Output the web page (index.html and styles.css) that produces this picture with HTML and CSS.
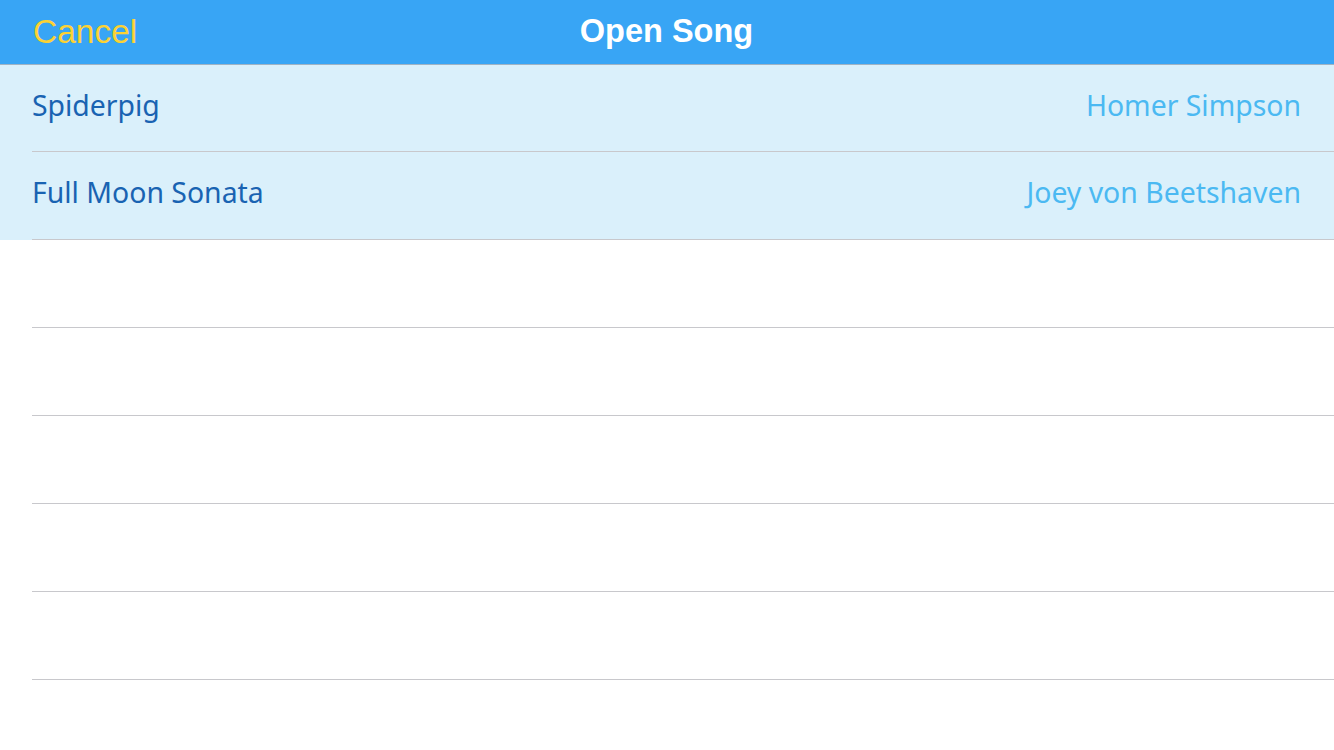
FILE: index.html
```html
<!DOCTYPE html>
<html>
<head>
<meta charset="utf-8">
<link rel="stylesheet" href="styles.css">
</head>
<body>
<div class="app">
  <header class="navbar">
    <span class="cancel">Cancel</span>
    <span class="title">Open Song</span>
    <span class="spacer"></span>
  </header>
  <ul class="list">
    <li class="row filled"><div class="cell"><span class="song">Spiderpig</span><span class="artist">Homer Simpson</span></div></li>
    <li class="row filled"><div class="cell"><span class="song">Full Moon Sonata</span><span class="artist">Joey von Beetshaven</span></div></li>
    <li class="row"><div class="cell"></div></li>
    <li class="row"><div class="cell"></div></li>
    <li class="row"><div class="cell"></div></li>
    <li class="row"><div class="cell"></div></li>
    <li class="row"><div class="cell"></div></li>
    <li class="row"><div class="cell"></div></li>
  </ul>
</div>
</body>
</html>
```
FILE: styles.css
```css
html, body {
  margin: 0;
  padding: 0;
  background: #ffffff;
  overflow: hidden;
}
.app {
  width: 1334px;
  height: 750px;
  display: flex;
  flex-direction: column;
}
.navbar {
  height: 65px;
  box-sizing: border-box;
  padding-bottom: 1px;
  background: #38a5f5;
  border-bottom: 1px solid #9fb3c4;
  display: grid;
  grid-template-columns: 1fr auto 1fr;
  align-items: center;
  flex-shrink: 0;
  font-family: "Liberation Sans", Arial, sans-serif;
}
.cancel {
  justify-self: start;
  margin-left: 33px;
  font-size: 33.5px;
  color: #fcd234;
}
.title {
  font-weight: bold;
  font-size: 32.5px;
  color: #ffffff;
  margin-left: -1px;
}
.list {
  list-style: none;
  margin: 0;
  padding: 0;
}
.row {
  height: 88px;
  display: flex;
}
.row:first-child {
  height: 87px;
}
.row.filled {
  background: #daf0fb;
}
.cell {
  flex: 1;
  margin-left: 32px;
  padding-right: 33px;
  padding-bottom: 7px;
  border-bottom: 1px solid #c8c8cc;
  display: flex;
  align-items: center;
  justify-content: space-between;
  font-family: "Noto Sans", "Open Sans", sans-serif;
  font-size: 28.4px;
}
.song {
  color: #1963b2;
}
.artist {
  color: #4bb9f2;
}
```
